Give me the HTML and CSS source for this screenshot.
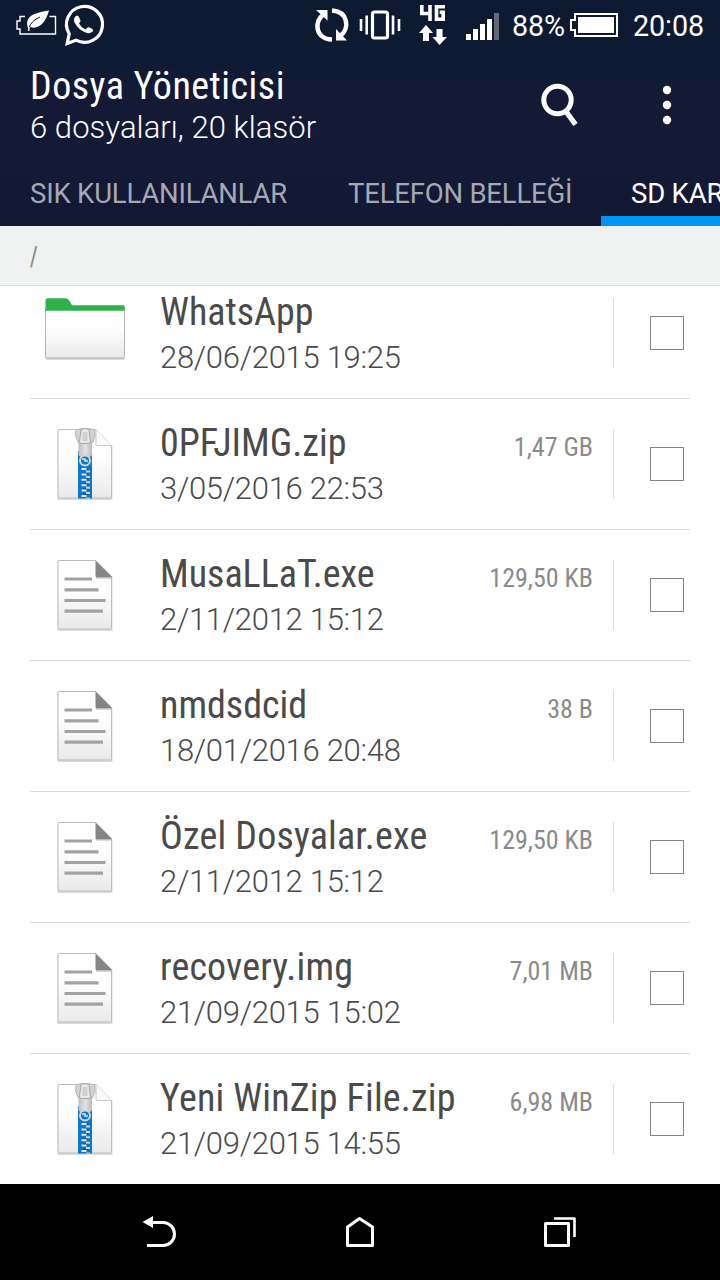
FILE: index.html
```
<!DOCTYPE html>
<html lang="tr">
<head>
<meta charset="utf-8">
<title>Dosya Yöneticisi</title>
<link rel="stylesheet" href="styles.css">
</head>
<body>
<svg class="defs" width="0" height="0" aria-hidden="true">
  <defs>
    <linearGradient id="paper" x1="0" y1="0" x2="0" y2="1"><stop offset="0" stop-color="#fff"/><stop offset=".45" stop-color="#fdfdfd"/><stop offset="1" stop-color="#e9e9e9"/></linearGradient>
    <linearGradient id="metal" x1="0" y1="0" x2="1" y2="0"><stop offset="0" stop-color="#bdbdbd"/><stop offset=".5" stop-color="#e2e2e2"/><stop offset="1" stop-color="#bcbcbc"/></linearGradient>
    <symbol id="folder" viewBox="0 0 110 82">
      <path d="M15.500 20h79v49.500q0 1.500-1.500 1.500h-76q-1.500 0-1.500-1.500z" fill="#999" opacity=".5" transform="translate(0 .8)"/>
      <path d="M15.500 20h79v48.500q0 1.500-1.500 1.500h-76q-1.500 0-1.500-1.500z" fill="url(#paper)" stroke="#b5b5b5"/>
      <path d="M15.500 22.700v-10q0-2.500 2.500-2.500h17.500q2.500 0 4 2.500l2.500 4.500h51.500q1.200 0 1.200 1.200v4.300z" fill="#2db24a"/>
    </symbol>
    <symbol id="page" viewBox="0 0 110 82">
      <path d="M27.500 10.500h38.500l16.500 16v53.700h-55z" fill="#999" opacity=".35" transform="translate(0 .8)"/>
      <path d="M29 10.500h37l15.500 16v51.500q0 1-1 1h-51.500q-1 0-1-1v-66.500q0-1 1-1z" fill="url(#paper)" stroke="#bdbdbd"/>
    </symbol>
    <symbol id="doc" viewBox="0 0 110 82">
      <use href="#page" width="110" height="82"/>
      <path d="M66 27.500h16" stroke="#bbb" stroke-width="2"/>
      <path d="M65.500 10.500l16.500 16.500h-15.500q-1 0-1-1z" fill="#858585"/>
      <path d="M34.500 29h27.500M34.500 39.800h34M34.500 50.500h41M34.500 61.200h38.500" stroke="#a2a2a2" stroke-width="3.200"/>
    </symbol>
    <symbol id="zip" viewBox="0 0 110 82">
      <use href="#page" width="110" height="82"/>
      <path d="M66 10.500v15q0 1 1 1h14.500" fill="#fafafa" stroke="#c8c8c8"/>
      <path d="M48 32h14v47.500h-14z" fill="#0877cf"/>
      <path d="M55.500 49v30" stroke="#34536f" stroke-width="5" stroke-dasharray="2 3"/>
      <path d="M54 49v30" stroke="#e7e7e7" stroke-width="5" stroke-dasharray="2 3.400"/>
      <path d="M58 51.500v28" stroke="#c9d5df" stroke-width="4" stroke-dasharray="2 3.400"/>
      <path d="M45.500 12q2-2.500 9.500-2.500t10 2.500q1 5-2.500 12h-14q-4-7-3-12z" fill="#d2d2d2" stroke="#b8b8b8"/>
      <path d="M48.500 22h13.500v13q0 3-3 3h-7.500q-3 0-3-3z" fill="url(#metal)"/>
      <path d="M51 10.500q4-2 8 0l1.500 12q0 2-2 2h-7q-2 0-2-2z" fill="#e8e8e8" stroke="#a5a5a5"/>
      <path d="M52.500 13h5v9h-5z" fill="#cfcfcf"/>
      <circle cx="55" cy="41.500" r="5" fill="#0877cf" stroke="#d4d4d4" stroke-width="2"/>
      <path d="M52 40h3v2h3" fill="none" stroke="#dbe3ea" stroke-width="1.600"/>
    </symbol>
  </defs>
</svg>
<div class="phone">
  <header class="header">
    <div class="status">
      <svg width="110" height="50" viewBox="0 0 110 50" fill="none" stroke="#fff">
        <path d="M25 16.500h-5v4.500h-3v8h3v5h35.500v-17.500h-6" stroke-width="1.400"/>
        <path d="M28.500 29C24 18 31 13 49 10.500C46 22 39 30 30.500 27z" fill="#fff" stroke="none"/>
        <path d="M29.200 27.500Q31 21 40 17" stroke="#0d1930" stroke-width="1"/>
        <path d="M28.800 31v-4" stroke-width="1.400"/>
        <path d="M67.200 44l2-9.600A18 18 0 1 1 76 40.800z" stroke-width="3.200" transform="translate(0 -.6)"/>
        <path d="M75 17q2-3 4 0l1.500 3.500q.3 1-1.500 3q2 4 6.500 6l2-2q1-.7 4.500 1.200q2 1 .8 2.700q-2.500 2.200-6 1.600q-8-2.500-12-10q-1.800-3.500.2-6z" fill="#fff" stroke="none"/>
      </svg>
      <div class="status-right">
        <svg width="198" height="50" viewBox="310 0 198 50" fill="none" stroke="#fff">
          <path d="M324 14C313.500 21 315 39 332 39.500M332 10.500C348 11.500 350 28 340.500 36" stroke-width="4.500"/>
          <path d="M316 10h11.500v10.500zM347 40.500h-11v-11.500z" fill="#fff" stroke="none"/>
          <rect x="372.500" y="12" width="15" height="26" rx="2" stroke-width="3.200"/>
          <path d="M361 19v12M366.700 15.500v19M393 15.500v19M399 19v12" stroke-width="2.600"/>
          <path d="M421.800 5v8.500h9M430 5v16M445 6.800h-8.500v12.500h6.700v-7h-3.500" stroke-width="3.600"/>
          <path d="M426 25l7 8h-4v8h-6v-8h-4zM439.500 45l-7-8h4v-8h6v8h4.500z" fill="#fff" stroke="none"/>
          <path d="M466 34h5v6h-5zM473 29h5v11h-5zM480 24h5v16h-5zM487 19h5v21h-5z" fill="#fff" stroke="none"/>
          <path d="M494 13h5v27h-5z" fill="#636979" stroke="none"/>
        </svg>
        <span class="percent">88%</span>
        <svg width="52" height="50" viewBox="569 0 52 50" fill="none" stroke="#fff" stroke-width="2">
          <path d="M575 14h42v22h-42v-6h-4v-10h4z"/><path d="M578 17h36v16h-36z" fill="#fff" stroke="none"/>
        </svg>
        <time class="clock">20:08</time>
      </div>
    </div>
    <div class="titlebar">
      <div class="titles"><h1 class="cond">Dosya Yöneticisi</h1><p>6 dosyaları, 20 klasör</p></div>
      <div class="actions">
        <svg width="42" height="50" viewBox="538 80 42 50" fill="none" stroke="#fff"><circle cx="557.500" cy="100" r="13.700" stroke-width="5"/><path d="M566 111.500l9.500 13" stroke-width="5.200"/></svg>
        <svg width="10" height="50" viewBox="662 80 10 50" fill="#fff"><circle cx="667" cy="90" r="4.200"/><circle cx="667" cy="105" r="4.200"/><circle cx="667" cy="120" r="4.200"/></svg>
      </div>
    </div>
    <nav class="tabs"><span>SIK KULLANILANLAR</span><span>TELEFON BELLEĞİ</span><span class="active">SD KART</span></nav>
  </header>
  <div class="path"><span>/</span></div>
  <main class="list">
    <article class="row"><svg class="icon" viewBox="0 0 110 82"><use href="#folder"/></svg><div class="info"><h2 class="cond">WhatsApp</h2><p>28/06/2015 19:25</p></div><span class="size cond"></span><span class="check"><i></i></span></article>
    <article class="row"><svg class="icon" viewBox="0 0 110 82"><use href="#zip"/></svg><div class="info"><h2 class="cond">0PFJIMG.zip</h2><p>3/05/2016 22:53</p></div><span class="size cond">1,47 GB</span><span class="check"><i></i></span></article>
    <article class="row"><svg class="icon" viewBox="0 0 110 82"><use href="#doc"/></svg><div class="info"><h2 class="cond">MusaLLaT.exe</h2><p>2/11/2012 15:12</p></div><span class="size cond">129,50 KB</span><span class="check"><i></i></span></article>
    <article class="row"><svg class="icon" viewBox="0 0 110 82"><use href="#doc"/></svg><div class="info"><h2 class="cond">nmdsdcid</h2><p>18/01/2016 20:48</p></div><span class="size cond">38 B</span><span class="check"><i></i></span></article>
    <article class="row"><svg class="icon" viewBox="0 0 110 82"><use href="#doc"/></svg><div class="info"><h2 class="cond loose">Özel Dosyalar.exe</h2><p>2/11/2012 15:12</p></div><span class="size cond">129,50 KB</span><span class="check"><i></i></span></article>
    <article class="row"><svg class="icon" viewBox="0 0 110 82"><use href="#doc"/></svg><div class="info"><h2 class="cond loose">recovery.img</h2><p>21/09/2015 15:02</p></div><span class="size cond">7,01 MB</span><span class="check"><i></i></span></article>
    <article class="row"><svg class="icon" viewBox="0 0 110 82"><use href="#zip"/></svg><div class="info"><h2 class="cond loose">Yeni WinZip File.zip</h2><p>21/09/2015 14:55</p></div><span class="size cond">6,98 MB</span><span class="check"><i></i></span></article>
  </main>
  <footer class="navbar">
    <svg width="40" height="40" viewBox="140 1212 40 40" fill="none" stroke="#fff" stroke-width="3"><path d="M152 1222.500h11a11.500 11.500 0 0 1 0 23h-16"/><path d="M142.500 1222l10.500-6v12z" fill="#fff" stroke="none"/></svg>
    <svg width="40" height="40" viewBox="340 1212 40 40" fill="none" stroke="#fff" stroke-width="3" stroke-linejoin="round"><path d="M347.500 1245.500v-18.500l12-8.500 13 8.500v18.500z"/></svg>
    <svg width="40" height="40" viewBox="540 1212 40 40" fill="none" stroke="#fff" stroke-width="3" stroke-linejoin="round"><path d="M545.500 1223.500h23v22h-23z"/><path d="M554 1218.500h20.500v18.500" stroke-width="2.600"/></svg>
  </footer>
</div>
</body>
</html>
```
FILE: styles.css
```
* { box-sizing: border-box; }
body, h1, h2, p { margin: 0; font-weight: 400; }
body { font-family: Roboto, "Noto Sans", sans-serif; background: #fff; }
svg { display: block; flex: none; }
.defs { position: absolute; }
.phone { width: 720px; height: 1280px; display: flex; flex-direction: column; overflow: hidden; }
.cond { font-family: "Roboto Condensed", Roboto, sans-serif; font-stretch: condensed; white-space: nowrap; }
.header { height: 226px; flex: none; color: #fff; background: linear-gradient(#0d1930 0, #0e1b34 60px, #141a36 95px, #141935 170px, #121833 100%); }
.status { height: 50px; display: flex; justify-content: space-between; }
.status-right { display: flex; line-height: 53px; font-size: 28.7px; letter-spacing: -0.1px; }
.percent { width: 61px; padding-left: 4px; }
.clock { width: 99px; padding-left: 12px; }
.titlebar { height: 120px; padding: 13px 48px 0 30px; display: flex; justify-content: space-between; }
.titles h1 { font-size: 38px; line-height: 46px; letter-spacing: 0.5px; }
.titles p { margin-top: -1px; font-size: 31px; line-height: 40px; font-weight: 300; letter-spacing: 0.06px; white-space: nowrap; }
.actions { display: flex; gap: 82px; padding-top: 17px; }
.tabs { height: 56px; display: flex; font-size: 27.5px; line-height: 47px; letter-spacing: -0.2px; overflow: hidden; color: #a6a8b3; white-space: nowrap; }
.tabs span { flex: none; width: 283px; padding-left: 30px; }
.tabs span:first-child { width: 318px; }
.tabs .active { color: #fff; border-bottom: 10px solid #0094f7; }
.path { height: 60px; flex: none; padding-left: 30px; line-height: 62px; font-size: 27px; font-weight: 500; color: #8b8b8b; background: #f0f2f1; border-bottom: 1px solid #dcdedd; }
.path span { display: inline-block; transform: scaleX(0.72); transform-origin: left; }
.list { height: 898px; flex: none; overflow: hidden; padding: 0 30px; }
.row { height: 131px; display: flex; border-bottom: 1px solid #dadada; }
.row:first-child { margin-top: -18px; }
.icon { width: 110px; height: 82px; margin-top: 20px; }
.info { flex: 1; padding: 21px 0 0 20px; color: #4a4a4a; }
.info h2 { font-size: 38px; line-height: 46px; }
.info .loose { letter-spacing: 0.17px; }
.info p { margin-top: 3px; font-size: 31px; line-height: 40px; font-weight: 300; letter-spacing: -0.28px; white-space: nowrap; }
.size { padding: 32px 20px 0 0; font-size: 26px; line-height: 32px; color: #8a8a8a; }
.check { width: 77px; height: 70px; margin-top: 30px; padding: 18px 0 0 36px; border-left: 1px solid #dadada; }
.check i { display: block; width: 34px; height: 34px; border: 1px solid #858585; }
.navbar { height: 96px; flex: none; padding: 28px 140px 0; display: flex; justify-content: space-between; background: #000; }
```
